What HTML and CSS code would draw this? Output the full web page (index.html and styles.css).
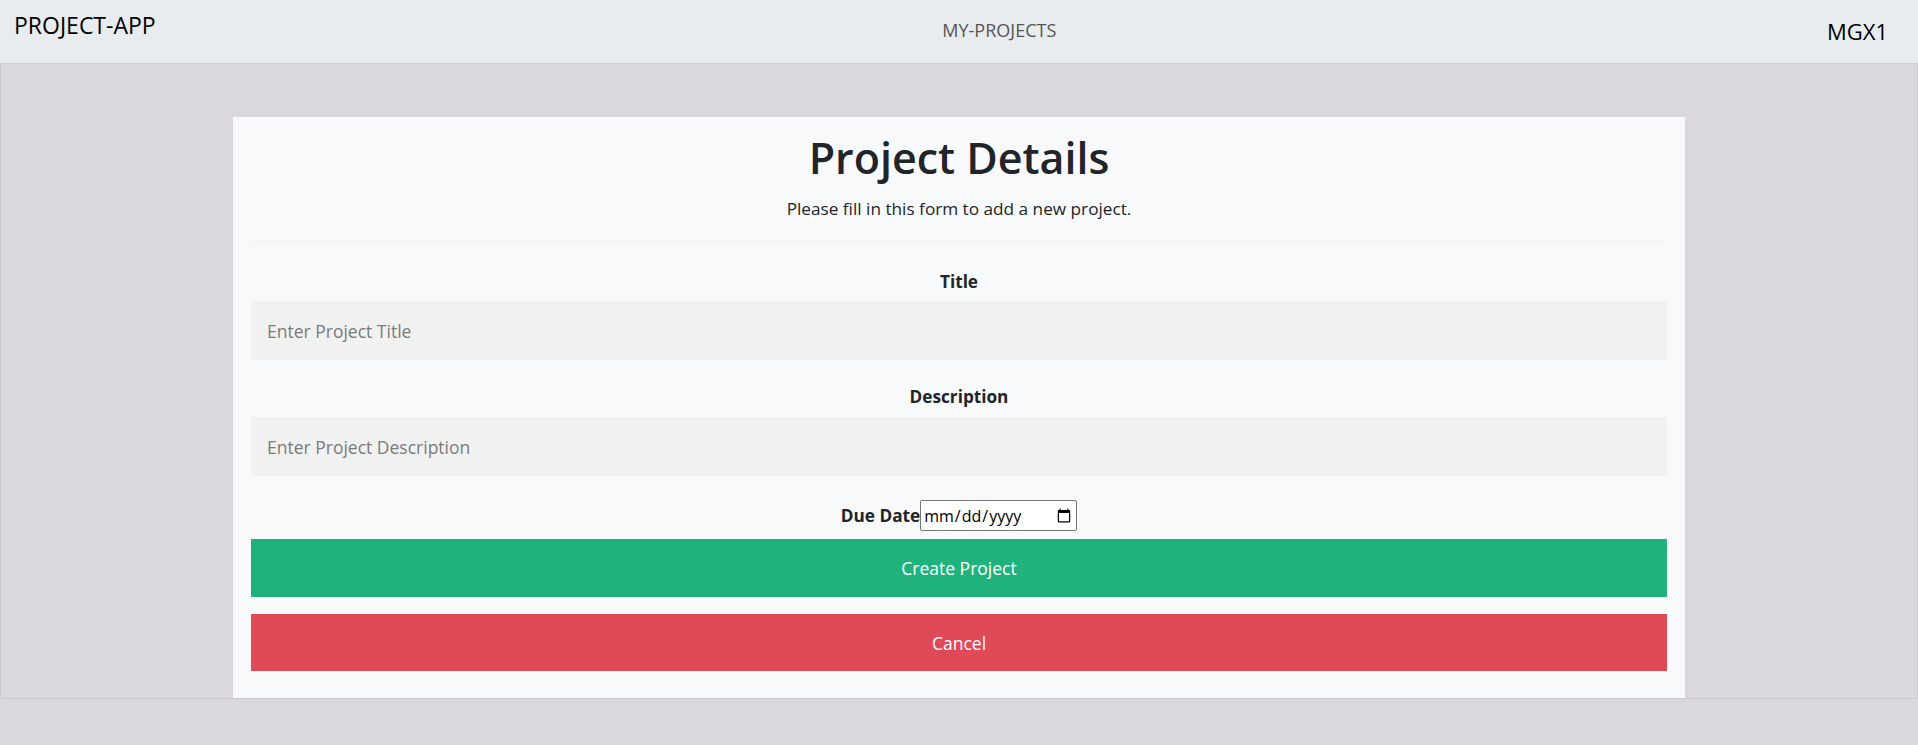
FILE: index.html
```html
<!DOCTYPE html>
<html lang="en">
<head>
<meta charset="utf-8">
<title>Project App</title>
<link rel="stylesheet" href="styles.css">
</head>
<body>
<header class="navbar">
  <a class="brand" href="#">PROJECT-APP</a>
  <a class="nav-link" href="#">MY-PROJECTS</a>
  <span class="user">MGX1</span>
</header>
<main class="main">
  <section class="card">
    <h1 class="title">Project Details</h1>
    <p class="subtitle">Please fill in this form to add a new project.</p>
    <hr class="divider">
    <form class="form">
      <div class="field">
        <label class="label" for="title">Title</label>
        <input class="text-input" id="title" type="text" placeholder="Enter Project Title">
      </div>
      <div class="field field-desc">
        <label class="label" for="desc">Description</label>
        <input class="text-input" id="desc" type="text" placeholder="Enter Project Description">
      </div>
      <div class="date-row">
        <label class="label" for="due">Due Date</label><input class="date-input" id="due" type="date">
      </div>
      <button class="btn btn-create" type="button">Create Project</button>
      <button class="btn btn-cancel" type="button">Cancel</button>
    </form>
  </section>
</main>
</body>
</html>
```
FILE: styles.css
```css
* { box-sizing: border-box; }
html, body { margin: 0; padding: 0; }
body {
  background: #dad8dc;
  font-family: "Open Sans", "Noto Sans", sans-serif;
  color: #212529;
  font-size: 16px;
}
.navbar {
  height: 64px;
  background: #e9ecef;
  border-bottom: 1px solid #cfd0d3;
  display: flex;
  justify-content: space-between;
  align-items: flex-start;
  padding: 0 30px 0 14px;
}
.brand {
  color: #000;
  text-decoration: none;
  font-size: 23px;
  line-height: 28px;
  margin-top: 11px;
}
.nav-link {
  color: #555;
  text-decoration: none;
  font-size: 18px;
  line-height: 22px;
  margin-top: 19px;
  margin-left: 16px;
}
.user {
  color: #000;
  font-size: 22px;
  line-height: 26px;
  margin-top: 18px;
}
.main {
  height: 635px;
  border: 1px solid #cbcbcd;
  border-top: none;
  padding-top: 53px;
  display: flex;
  justify-content: center;
}
.card {
  width: 1452px;
  background: #f8f9fa;
  padding: 0 18px;
}
.title {
  margin: 0;
  text-align: center;
  font-size: 43px;
  font-weight: 600;
  line-height: 60px;
  padding-top: 11px;
}
.subtitle {
  margin: 9px 0 0;
  text-align: center;
  font-size: 17.2px;
  line-height: 24px;
}
.divider {
  margin: 20px 0 0;
  border: none;
  border-top: 1px solid #eff0f1;
}
.form {
  display: flex;
  flex-direction: column;
}
.field {
  display: flex;
  flex-direction: column;
  align-items: center;
  margin-top: 28px;
}
.field-desc { margin-top: 25px; }
.label {
  font-weight: 700;
  font-size: 17.2px;
  line-height: 24px;
  margin-bottom: 7px;
}
.field-desc .label { margin-bottom: 8px; }
.text-input {
  width: 100%;
  height: 59px;
  border: none;
  background: #f1f1f1;
  padding: 0 16px;
  font-family: inherit;
  font-size: 17.5px;
  color: #212529;
  outline: none;
}
.text-input::placeholder { color: #7b7b7b; }
.date-row {
  display: flex;
  justify-content: center;
  align-items: center;
  margin-top: 24px;
  height: 31px;
}
.date-row .label { margin: 0; }
.date-input {
  width: 157px;
  height: 31px;
  font-family: inherit;
  font-size: 16px;
  border: 1px solid #767676;
  border-radius: 2px;
  background: #fff;
  color: #000;
  padding: 1px 2px;
}
.btn {
  width: 100%;
  border: none;
  color: #fff;
  font-family: inherit;
  font-size: 17.5px;
  cursor: pointer;
}
.btn-create {
  background: #1fb27d;
  height: 58px;
  margin-top: 8px;
}
.btn-cancel {
  background: #e04958;
  height: 57px;
  margin-top: 17px;
}
```
